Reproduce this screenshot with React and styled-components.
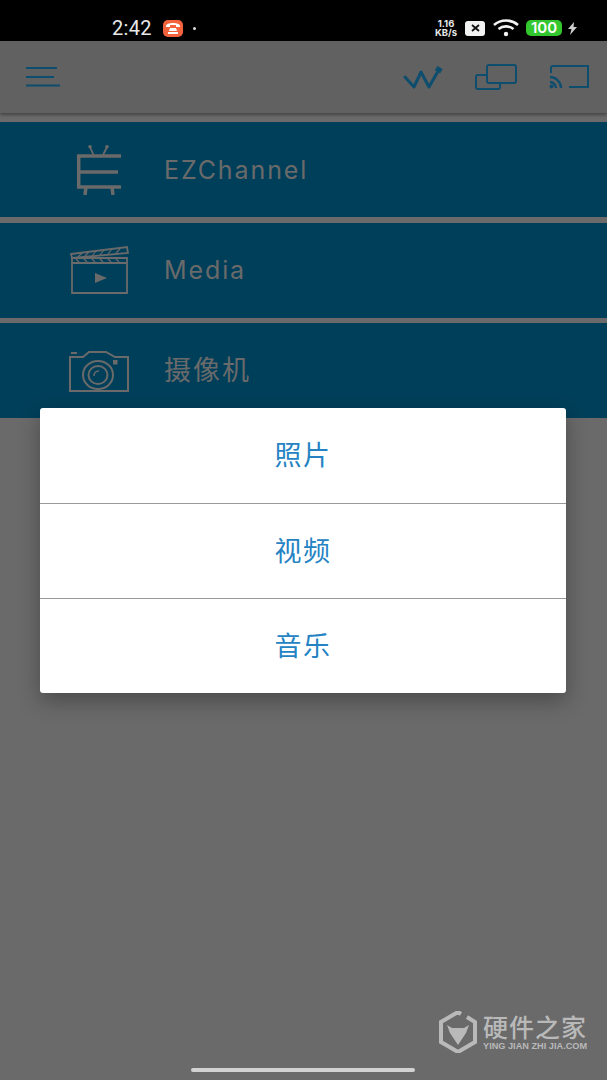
import React from 'react'
import styled, {createGlobalStyle} from 'styled-components'

const GlobalStyle = createGlobalStyle`
  html, body {
    margin: 0;
    padding: 0;
    background: #696969;
  }
  body {
    font-family: "Inter", "Noto Sans CJK SC", sans-serif;
  }
`

const Page = styled.div`
  position: relative;
  width: 607px;
  height: 1080px;
  overflow: hidden;
  background: #6a6a6a;
`

const StatusBar = styled.div`
  height: 41px;
  background: #000;
  display: flex;
  align-items: center;
  padding: 15px 0 0 112px;
  box-sizing: border-box;
  color: #e8e8e8;
`

const Time = styled.span`
  font-family: "Roboto", sans-serif;
  font-size: 20px;
  width: 51px;
  letter-spacing: 0.3px;
`

const AppBadge = styled.span`
  width: 20px;
  height: 17px;
  border-radius: 5px;
  background: #f4633c;
  display: flex;
  align-items: center;
  justify-content: center;
`

const Dot = styled.span`
  width: 3px;
  height: 3px;
  border-radius: 50%;
  background: #ddd;
  margin-left: 10px;
`

const StatusRight = styled.div`
  margin-left: auto;
  padding-right: 30px;
  display: flex;
  align-items: center;
`

const Speed = styled.span`
  font-family: "Inter", sans-serif;
  font-weight: 700;
  font-size: 9.5px;
  line-height: 9px;
  text-align: center;
  width: 28px;
  color: #e6e6e6;
`

const XBadge = styled.span`
  width: 20px;
  height: 15px;
  margin-left: 5px;
  border-radius: 3px;
  background: #f2f2f2;
  display: flex;
  align-items: center;
  justify-content: center;
`

const Battery = styled.span`
  width: 36px;
  height: 16px;
  margin-left: 7px;
  border-radius: 5px;
  background: #33c72f;
  color: #fff;
  font-family: "Inter", sans-serif;
  font-weight: 600;
  font-size: 15px;
  line-height: 16px;
  text-align: center;
`

const Header = styled.header`
  height: 72px;
  background: #616161;
  box-shadow: 0 2px 3px rgba(0, 0, 0, 0.35);
  display: flex;
  align-items: center;
  padding: 0 17px 0 26px;
  box-sizing: border-box;
`

const HeaderIcons = styled.div`
  margin-left: auto;
  display: flex;
  align-items: center;
  gap: 32px;
`

const MenuList = styled.div`
  margin-top: 9px;
  display: flex;
  flex-direction: column;
  gap: 5.5px;
`

const MenuRow = styled.div`
  height: 95px;
  background: #003f5a;
  display: flex;
  align-items: center;
`

const MenuIcon = styled.div`
  width: 164px;
  padding-left: 69px;
  padding-right: 35px;
  box-sizing: border-box;
  display: flex;
  align-items: center;
  justify-content: center;
`

const MenuLabel = styled.span`
  color: #6a6a6a;
  font-family: "Inter", "Noto Sans CJK SC", sans-serif;
  font-size: ${p => (p.$cjk ? '27px' : '25px')};
  letter-spacing: ${p => (p.$cjk ? '2px' : '1.9px')};
  padding-bottom: ${p => (p.$cjk ? '4px' : '0')};
  font-weight: 400;
`

const Dialog = styled.div`
  position: absolute;
  left: 40px;
  top: 408px;
  width: 526px;
  border-radius: 3px;
  background: #fff;
  box-shadow: 0 8px 22px rgba(0, 0, 0, 0.3);
  display: flex;
  flex-direction: column;
`

const DialogItem = styled.div`
  height: 95px;
  box-sizing: border-box;
  display: flex;
  align-items: center;
  justify-content: center;
  padding-bottom: 4px;
  color: #2583c4;
  font-family: "Noto Sans CJK SC", sans-serif;
  font-size: 27px;
  letter-spacing: 1.5px;
  border-top: ${p => (p.$first ? 'none' : '1.5px solid #999')};
`

const Watermark = styled.div`
  position: absolute;
  left: 439px;
  top: 1011px;
  display: flex;
  align-items: center;
  gap: 6px;
  color: #b9b9b9;
`

const WatermarkText = styled.div`
  display: flex;
  flex-direction: column;
`

const WatermarkTitle = styled.span`
  font-family: "Noto Sans CJK SC", sans-serif;
  font-weight: 500;
  font-size: 25px;
  line-height: 28px;
  letter-spacing: 1px;
`

const WatermarkSub = styled.span`
  font-family: "Liberation Sans", sans-serif;
  font-weight: 700;
  font-size: 9.200px;
  line-height: 12px;
  white-space: nowrap;
`

const HomeBar = styled.div`
  position: absolute;
  left: 191px;
  top: 1068px;
  width: 224px;
  height: 4px;
  border-radius: 2px;
  background: #d2d2d2;
`

const BLUE = '#0d4d6e'
const GRAY = '#6a6a6a'

const Hamburger = () => (
  <svg width="34" height="22" viewBox="0 0 34 22" stroke={BLUE} strokeWidth="2" fill="none">
    <path d="M0 2h31M0 11h28M0 19.500h34" />
  </svg>
)

const UsbIcon = () => (
  <svg width="40" height="26" viewBox="0 0 40 26" fill="none" stroke={BLUE} strokeWidth="3" strokeLinejoin="round" strokeLinecap="round">
    <path d="M2 13l9 10 7-15 8 15 8-14" />
    <path d="M34.500 8l2.500-4.500" strokeWidth="6" strokeLinecap="butt" />
  </svg>
)

const ScreensIcon = () => (
  <svg width="42" height="26" viewBox="0 0 42 26" fill="none" stroke={BLUE} strokeWidth="2">
    <rect x="12" y="1" width="29" height="18" rx="2" />
    <path d="M12 11H3a2 2 0 0 0-2 2v10a2 2 0 0 0 2 2h20a2 2 0 0 0 2-2v-4" />
  </svg>
)

const CastIcon = () => (
  <svg width="41" height="24" viewBox="0 0 41 24" fill="none" stroke={BLUE} strokeWidth="2">
    <path d="M2 8V3a2 2 0 0 1 2-2h35v21H20" />
    <path d="M1 12c6 0 11 5 11 11M1 17c3 0 6 3 6 6" strokeWidth="2.400" />
    <circle cx="2.500" cy="21.500" r="2" fill={BLUE} stroke="none" />
  </svg>
)

const TvIcon = () => (
  <svg width="46" height="50" viewBox="0 0 46 50" fill="none" stroke={GRAY} strokeWidth="3.500">
    <path d="M45 11H2.700v31H45M2.700 27H42" />
    <path d="M14 2l3.500 8M31 2l-4 8" strokeWidth="1.800" />
    <circle cx="14" cy="1.800" r="1.800" fill={GRAY} stroke="none" />
    <circle cx="31" cy="1.800" r="1.800" fill={GRAY} stroke="none" />
    <path d="M10 42l-1 8M36 42l1 8" strokeWidth="3.500" />
  </svg>
)

const ClapIcon = () => (
  <svg width="59" height="48" viewBox="0 0 59 48" fill="none" stroke={GRAY} strokeWidth="1.800">
    <path d="M2 12h55v35H2zM2 17h55" />
    <path d="M1 8l56-7 1 6-56 5z" />
    <path d="M8 11l4-4M15 10l4-4M22 10l4-5M30 9l4-5M38 8l4-5M46 7l4-4M6 13l3 3M14 13l3 3M22 13l3 3M30 13l3 3M38 13l3 3M46 13l3 3" strokeWidth="1.200" />
    <path d="M25 27l12 5-12 5z" fill={GRAY} stroke="none" />
  </svg>
)

const CameraIcon = () => (
  <svg width="60" height="42" viewBox="0 0 60 42" fill="none" stroke={GRAY} strokeWidth="2">
    <path d="M1 7h13l6-5h17l9 5h13v34H1z" />
    <path d="M2 3h6" />
    <ellipse cx="29" cy="25" rx="15" ry="14" />
    <ellipse cx="29" cy="25" rx="9.500" ry="9" />
    <path d="M25 26a4.500 4.500 0 0 1 5-5" strokeWidth="1.500" />
    <rect x="44" y="10" width="4.500" height="4.500" fill={GRAY} stroke="none" />
  </svg>
)

const PhoneGlyph = () => (
  <svg width="14" height="12" viewBox="0 0 14 12" fill="#fff">
    <path d="M0 4c0-4 14-4 14 0v1h-4V3H4v2H0z" />
    <path d="M4 6h6l1 3H3z" />
    <rect x="2" y="10" width="10" height="2" />
  </svg>
)

const WifiIcon = () => (
  <svg width="26" height="18" viewBox="0 0 26 18" fill="none" stroke="#f2f2f2" strokeWidth="2.600" style={{marginLeft: 8}}>
    <path d="M1 6c7-6 17-6 24 0M5.500 10c4.500-3.500 10.500-3.500 15 0" />
    <circle cx="13" cy="15" r="2.200" fill="#f2f2f2" stroke="none" />
  </svg>
)

const BoltIcon = () => (
  <svg width="9" height="13" viewBox="0 0 9 13" fill="#cfcfcf" style={{marginLeft: 6}}>
    <path d="M6 0L0 7h3.500L2 13l7-8H5.500z" />
  </svg>
)

const XGlyph = () => (
  <svg width="9" height="8" viewBox="0 0 9 8" stroke="#111" strokeWidth="1.800">
    <path d="M1 1l7 6M8 1l-7 6" />
  </svg>
)

const LogoIcon = () => (
  <svg width="38" height="42" viewBox="0 0 38 42" fill="none">
    <path d="M22 3L19 1 2 11v20l17 10 17-10V11l-8-5" stroke="#b9b9b9" strokeWidth="4" />
    <path d="M8 14l5 3h12l5-3-3 8-8 12-8-12z" fill="#b9b9b9" />
  </svg>
)

const items = [
  {label: 'EZChannel', icon: <TvIcon />},
  {label: 'Media', icon: <ClapIcon />},
  {label: '摄像机', icon: <CameraIcon />, cjk: true},
]

const App = () => {
  return (
    <Page>
      <GlobalStyle />
      <StatusBar>
        <Time>2:42</Time>
        <AppBadge><PhoneGlyph /></AppBadge>
        <Dot />
        <StatusRight>
          <Speed>1.16<br />KB/s</Speed>
          <XBadge><XGlyph /></XBadge>
          <WifiIcon />
          <Battery>100</Battery>
          <BoltIcon />
        </StatusRight>
      </StatusBar>
      <Header>
        <Hamburger />
        <HeaderIcons>
          <UsbIcon />
          <ScreensIcon />
          <CastIcon />
        </HeaderIcons>
      </Header>
      <MenuList>
        {items.map(item => (
          <MenuRow key={item.label}>
            <MenuIcon>{item.icon}</MenuIcon>
            <MenuLabel $cjk={item.cjk}>{item.label}</MenuLabel>
          </MenuRow>
        ))}
      </MenuList>
      <Dialog>
        <DialogItem $first>照片</DialogItem>
        <DialogItem>视频</DialogItem>
        <DialogItem>音乐</DialogItem>
      </Dialog>
      <Watermark>
        <LogoIcon />
        <WatermarkText>
          <WatermarkTitle>硬件之家</WatermarkTitle>
          <WatermarkSub>YING JIAN ZHI JIA.COM</WatermarkSub>
        </WatermarkText>
      </Watermark>
      <HomeBar />
    </Page>
  )
}

export default App
